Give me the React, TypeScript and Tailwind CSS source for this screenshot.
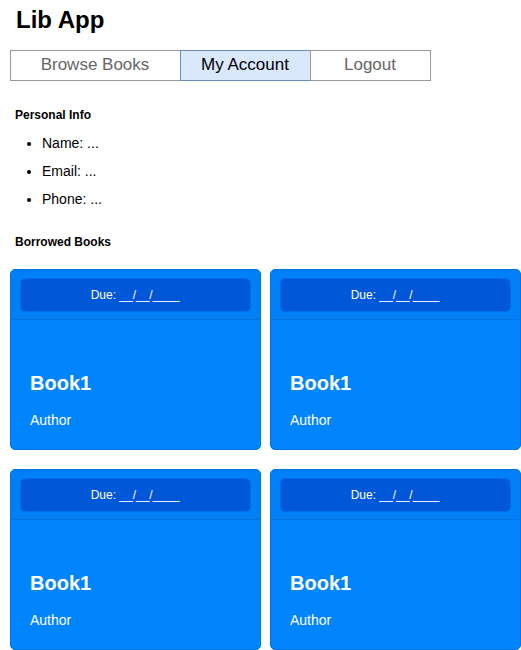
const tabs = [
  { label: "Browse Books", active: false, width: "w-[171px]" },
  { label: "My Account", active: true, width: "w-[131px]" },
  { label: "Logout", active: false, width: "w-[121px]" },
];

const info = ["Name: ...", "Email: ...", "Phone: ..."];

const books = [1, 2, 3, 4].map((id) => ({
  id,
  title: "Book1",
  author: "Author",
  due: "__/__/____",
}));

function NavTabs() {
  return (
    <nav className="mt-3.5 flex pl-px">
      {tabs.map((tab) => (
        <button
          key={tab.label}
          type="button"
          aria-current={tab.active ? "page" : undefined}
          className={`-ml-px h-[31px] border pr-px pb-0.5 text-[17px] leading-6 ${tab.width} ${
            tab.active
              ? "border-[#6c8ebf] bg-[#dae8fc] text-black"
              : "border-[#999999] bg-white text-[#666666]"
          }`}
        >
          {tab.label}
        </button>
      ))}
    </nav>
  );
}

function BookCard({ title, author, due }: { title: string; author: string; due: string }) {
  return (
    <article className="h-[181px] overflow-hidden rounded-[5px] border border-[#0074df] bg-[#0085ff] text-white">
      <header className="border-b border-[#0074df] bg-[#0080f4] px-[9px] pt-2 pb-[7px]">
        <p className="h-[34px] rounded-[5px] border border-[#006ee9] bg-[#0057d8] pr-px text-center text-xs leading-8">
          Due: {due}
        </p>
      </header>
      <div className="px-[19px] pt-[47px]">
        <h3 className="text-xl leading-8 font-bold">{title}</h3>
        <p className="mt-[11px] text-sm leading-5">{author}</p>
      </div>
    </article>
  );
}

export default function App() {
  return (
    <main className="min-h-screen bg-white pl-[10px] font-['Liberation_Sans',Arial,sans-serif] text-black">
      <h1 className="px-1.5 pt-1 text-2xl leading-8 font-bold">Lib App</h1>
      <NavTabs />
      <section className="mt-[26px] px-[5px]">
        <h2 className="text-xs leading-4 font-bold">Personal Info</h2>
        <ul className="mt-1.5 list-disc pl-[27px] text-sm leading-7">
          {info.map((line) => (
            <li key={line}>{line}</li>
          ))}
        </ul>
      </section>
      <section className="mt-[21px]">
        <h2 className="px-[5px] text-xs leading-4 font-bold">Borrowed Books</h2>
        <div className="mt-[19px] grid grid-cols-2 gap-x-[9px] gap-y-[19px]">
          {books.map((book) => (
            <BookCard key={book.id} title={book.title} author={book.author} due={book.due} />
          ))}
        </div>
      </section>
    </main>
  );
}
